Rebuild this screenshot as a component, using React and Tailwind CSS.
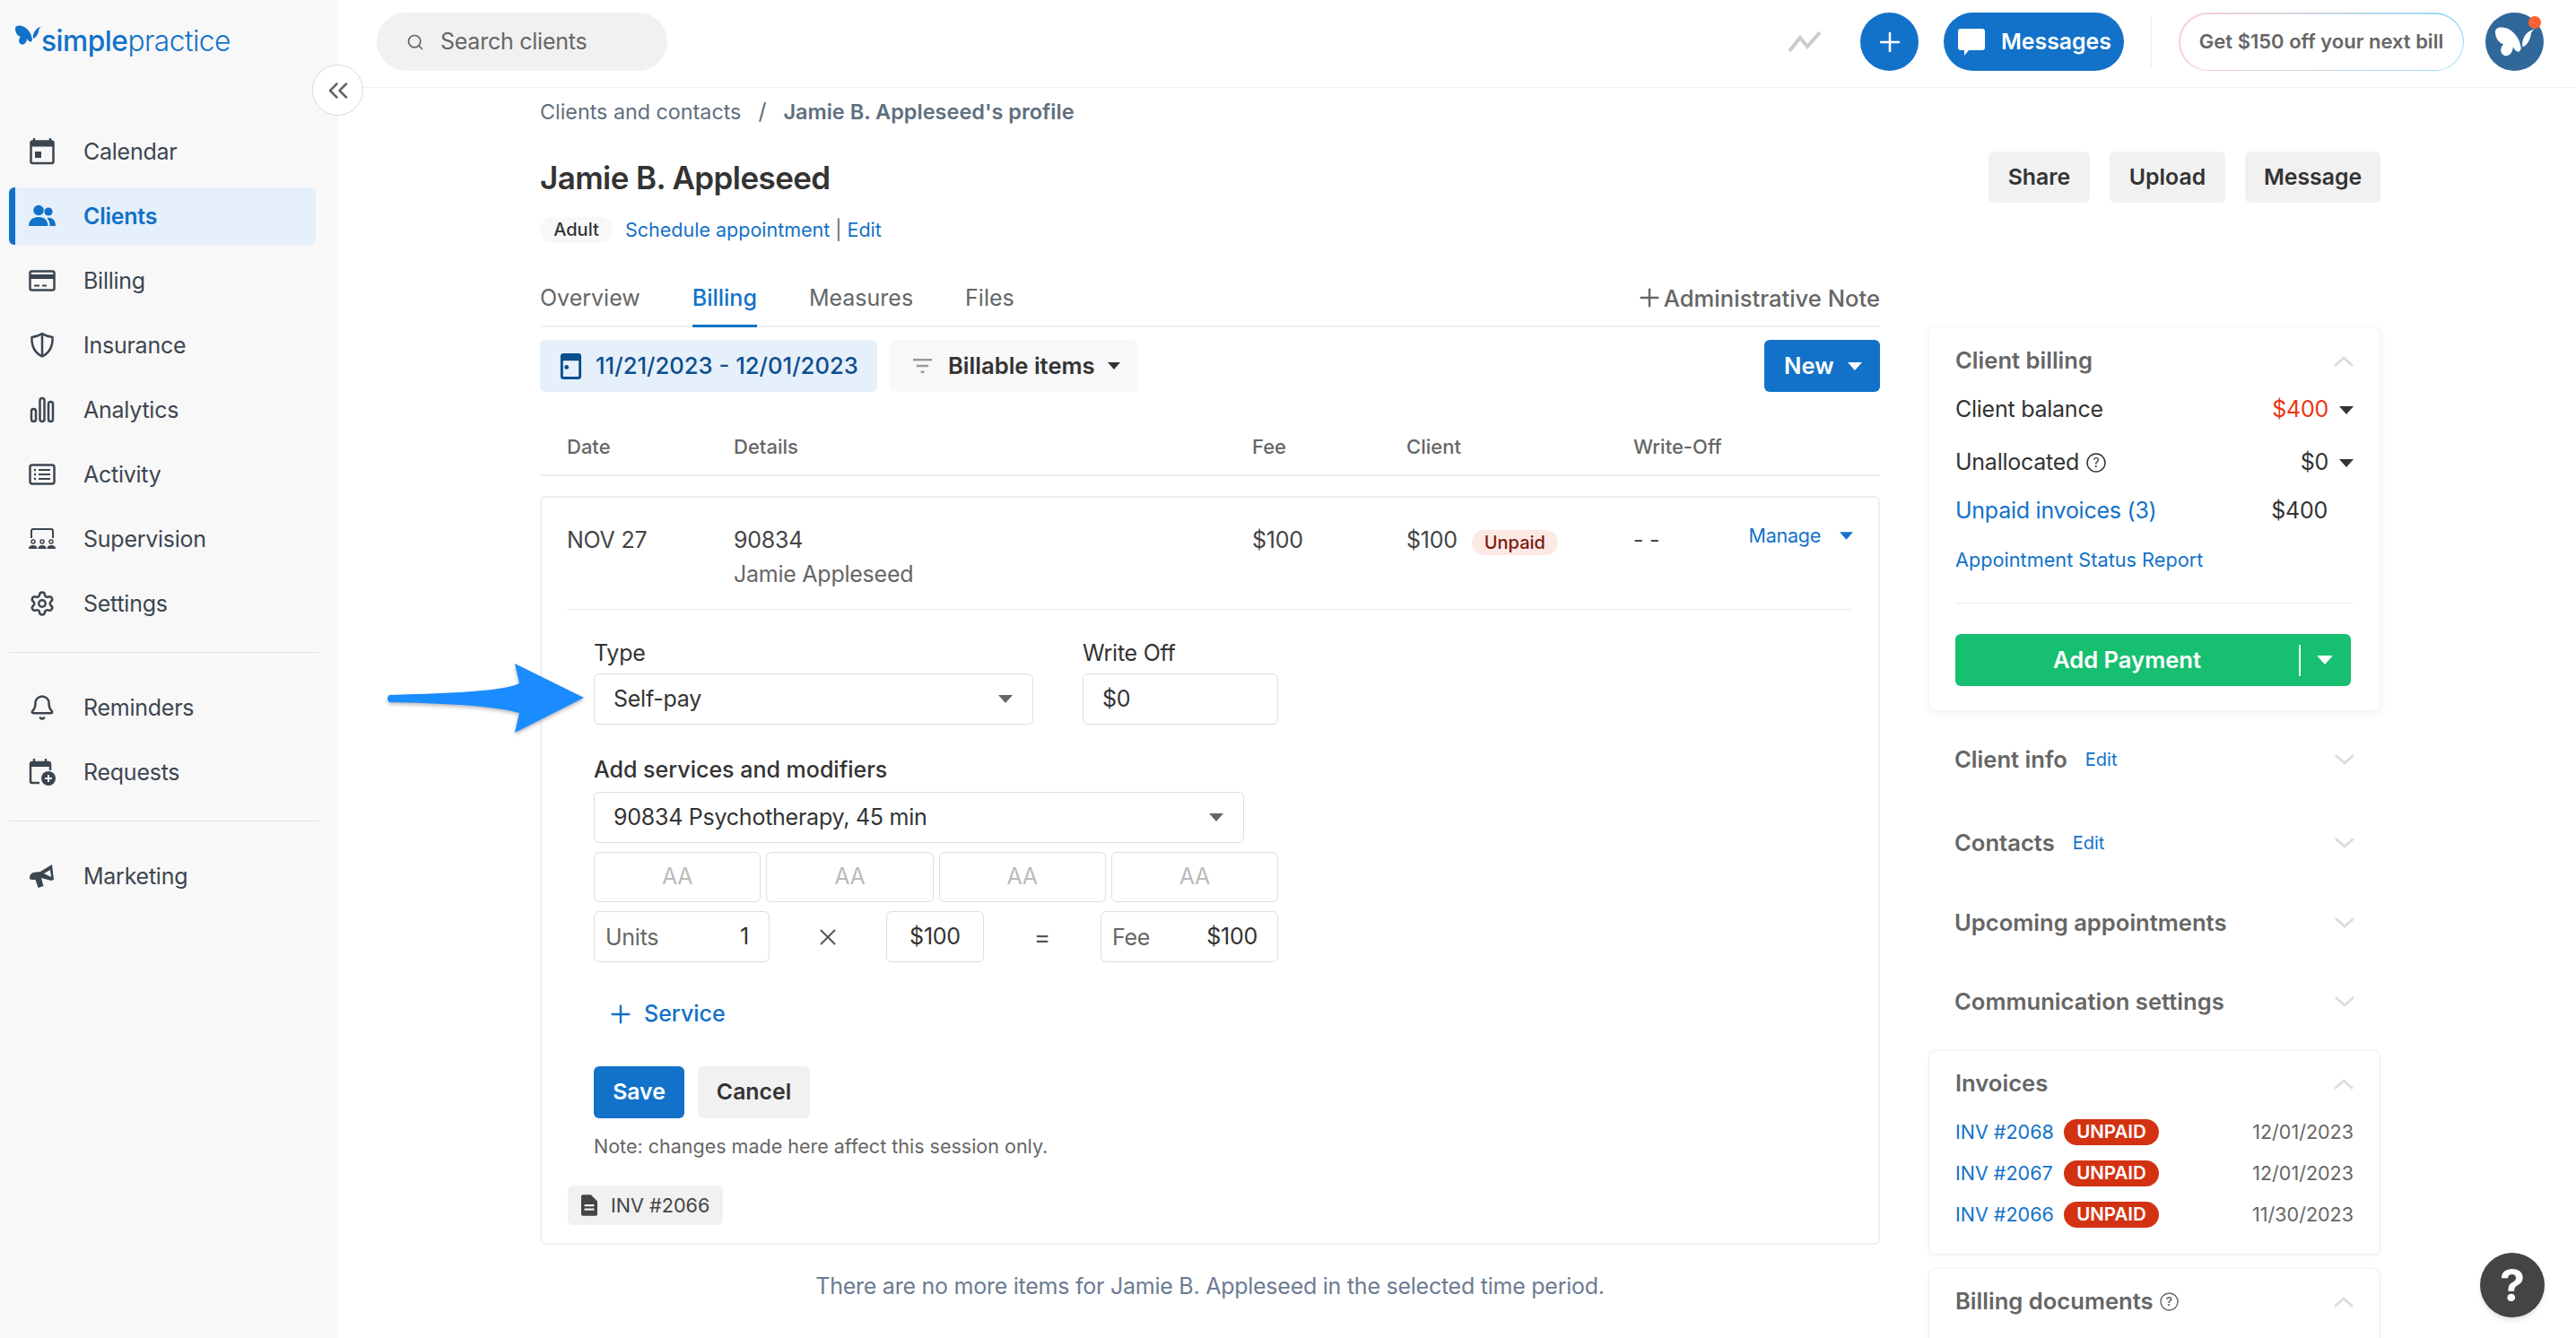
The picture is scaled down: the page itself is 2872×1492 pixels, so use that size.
import React from "react";
import { Settings, Bell, Search, ChevronsLeft, Plus, X } from "lucide-react";

const Caret = ({ className = "" }) => (
  <svg viewBox="0 0 16 9" className={className}>
    <path d="M0 0H16L8 9Z" fill="currentColor" />
  </svg>
);

const Chevron = ({ up }) => (
  <svg viewBox="0 0 22 13" className="w-[22px] h-[13px] shrink-0" fill="none" stroke="#dcdcdc" strokeWidth="3" strokeLinecap="round" strokeLinejoin="round">
    <path d={up ? "M2 11L11 3l9 8" : "M2 2l9 8 9-8"} />
  </svg>
);

const Butterfly = ({ className = "", color = "currentColor" }) => (
  <svg viewBox="0 0 29 23" className={className}>
    <path d="M0 4C0 0 5 0 9 1.500c5 2.500 9 7.500 10 14.500-1 4-4 3-6-1 0 5-4 8-7 6-3-2-2-6 0-8C2 12 0 8 0 4z" fill={color} />
    <path d="M20 15c-1-6 3-12 9-13-2 1-3 3-3 5-1 4-3 7-6 8z" fill={color} />
  </svg>
);

const CalendarIcon = () => (
  <svg viewBox="0 0 30 30" className="w-[30px] h-[30px] text-[#3c4650]">
    <path d="M6 1v4M24 1v4" stroke="currentColor" strokeWidth="2.500" strokeLinecap="round" />
    <rect x="2.500" y="3.500" width="25" height="24.500" rx="2" fill="none" stroke="currentColor" strokeWidth="2.500" />
    <rect x="2.500" y="3.500" width="25" height="6" fill="currentColor" />
    <rect x="7" y="15" width="7" height="7" fill="currentColor" />
  </svg>
);

const UsersIcon = () => (
  <svg viewBox="0 0 30 30" className="w-[30px] h-[30px] text-[#1272c9]">
    <circle cx="11" cy="8.500" r="5.800" fill="currentColor" />
    <circle cx="22" cy="10" r="4.600" fill="currentColor" />
    <path d="M0 26c0-6 4-10 11-10s10.500 4 10.500 10z" fill="currentColor" />
    <path d="M23.500 26c0-4-1-6.500-3-9 5-1.500 9.500 2 9.500 9z" fill="currentColor" />
  </svg>
);

const CardIcon = () => (
  <svg viewBox="0 0 30 30" className="w-[30px] h-[30px] text-[#3c4650]">
    <rect x="1.500" y="4.500" width="27" height="21" rx="2" fill="none" stroke="currentColor" strokeWidth="2.500" />
    <rect x="1.500" y="8" width="27" height="5" fill="currentColor" />
    <path d="M6 20.500h6M15 20.500h5" stroke="currentColor" strokeWidth="2" />
  </svg>
);

const ShieldIcon = () => (
  <svg viewBox="0 0 30 30" className="w-[30px] h-[30px] text-[#3c4650]">
    <path d="M15 2c3 2 7 3.500 11.500 4 .5 10-2.500 17-11.500 21.500C6 23 3 16 3.500 6 8 5.500 12 4 15 2z" fill="none" stroke="currentColor" strokeWidth="2.500" strokeLinejoin="round" />
    <path d="M15 3v24" stroke="currentColor" strokeWidth="2.500" />
  </svg>
);

const BarsIcon = () => (
  <svg viewBox="0 0 30 30" className="w-[30px] h-[30px] text-[#3c4650]" fill="none" stroke="currentColor" strokeWidth="2.500">
    <rect x="3" y="14" width="5" height="14" rx="2.500" />
    <rect x="12.500" y="2" width="5" height="26" rx="2.500" />
    <rect x="22" y="6" width="5" height="22" rx="2.500" />
  </svg>
);

const ListIcon = () => (
  <svg viewBox="0 0 30 30" className="w-[30px] h-[30px] text-[#3c4650]" fill="none" stroke="currentColor">
    <rect x="1.500" y="4.500" width="27" height="21" rx="2.500" strokeWidth="2.500" />
    <path d="M11 10h13M11 15h13M11 20h13" strokeWidth="2" />
    <path d="M6 10h2M6 15h2M6 20h2" strokeWidth="2.500" />
  </svg>
);

const SupervisionIcon = () => (
  <svg viewBox="0 0 30 30" className="w-[30px] h-[30px] text-[#3c4650]">
    <path d="M3 14V6a2 2 0 0 1 2-2h20a2 2 0 0 1 2 2v8" fill="none" stroke="currentColor" strokeWidth="2" />
    <circle cx="5" cy="18" r="2" fill="none" stroke="currentColor" strokeWidth="1.500" />
    <circle cx="15" cy="18" r="2" fill="none" stroke="currentColor" strokeWidth="1.500" />
    <circle cx="25" cy="18" r="2" fill="none" stroke="currentColor" strokeWidth="1.500" />
    <path d="M0 26c0-3 2-4 5-4s4.500 1 4.500 4zM10.500 26c0-3 1.500-4 4.500-4s4.500 1 4.500 4zM20.500 26c0-3 1.500-4 4.500-4s5 1 5 4z" fill="currentColor" />
  </svg>
);

const RequestsIcon = () => (
  <svg viewBox="0 0 30 30" className="w-[30px] h-[30px] text-[#3c4650]">
    <path d="M6 1v4M19 1v4" stroke="currentColor" strokeWidth="2.500" strokeLinecap="round" />
    <path d="M12 27H4a2 2 0 0 1-2-2V6a2 2 0 0 1 2-2h18a2 2 0 0 1 2 2v7" fill="none" stroke="currentColor" strokeWidth="2.500" />
    <rect x="2" y="4" width="22" height="5" fill="currentColor" />
    <circle cx="22" cy="22" r="8" fill="currentColor" />
    <path d="M22 18v8M18 22h8" stroke="#f8f8f8" strokeWidth="2" />
  </svg>
);

const MegaphoneIcon = () => (
  <svg viewBox="0 0 30 30" className="w-[30px] h-[30px] text-[#3c4650]">
    <path d="M1 17c0-3 1.500-5 4-6l8-1 13-8 2 17-3 1-11-3 2.500 9-6 2-3-9c-4 0-6.500 0-6.500-2z" fill="currentColor" />
    <path d="M17 12l7-4 1 8z" fill="#f8f8f8" />
  </svg>
);

const navTop = [
  { label: "Calendar", icon: <CalendarIcon /> },
  { label: "Clients", icon: <UsersIcon />, active: true },
  { label: "Billing", icon: <CardIcon /> },
  { label: "Insurance", icon: <ShieldIcon /> },
  { label: "Analytics", icon: <BarsIcon /> },
  { label: "Activity", icon: <ListIcon /> },
  { label: "Supervision", icon: <SupervisionIcon /> },
  { label: "Settings", icon: <Settings className="w-[30px] h-[30px] text-[#3c4650]" strokeWidth={2} /> },
];

const NavItem = ({ label, icon, active }) => (
  <div
    className={`w-[342px] h-16 mb-2 flex items-center gap-[31px] pl-[15px] border-l-[7px] rounded-md text-[25px] tracking-[-0.25px] ${
      active ? "bg-[#e6f0fa] border-[#1272c9] text-[#1272c9] font-semibold" : "border-transparent text-[#3c4650]"
    }`}
  >
    <span className="w-[30px] h-[30px] shrink-0">{icon}</span>
    <span className="mt-[2px]">{label}</span>
  </div>
);

const Sidebar = () => (
  <aside className="w-[377px] shrink-0 bg-[#f8f8f8] pl-[10px] h-full">
    <div className="h-[137px] pt-[22px] pl-[7px] flex items-start">
      <div className="flex items-start text-[#1272c9]">
        <Butterfly className="w-[29px] h-[23px] mt-[6px] shrink-0" />
        <span className="text-[31.700px] leading-[46px] tracking-[-0.5px] mt-[1px]">
          <span className="font-medium">simple</span>
          <span className="font-light">practice</span>
        </span>
      </div>
    </div>
    {navTop.map((n) => (
      <NavItem key={n.label} {...n} />
    ))}
    <div className="w-[345px] h-px bg-[#e2e2e2] mt-[22px] mb-[29px]" />
    <NavItem label="Reminders" icon={<Bell className="w-[30px] h-[30px] text-[#3c4650]" strokeWidth={2} />} />
    <NavItem label="Requests" icon={<RequestsIcon />} />
    <div className="w-[345px] h-px bg-[#e2e2e2] mt-[22px] mb-[29px]" />
    <NavItem label="Marketing" icon={<MegaphoneIcon />} />
  </aside>
);

const TopBar = () => (
  <header className="h-[98px] shrink-0 border-b border-[#f1f1f1] flex items-start pt-[14px] pl-[43px] pr-[36px]">
    <div className="w-[324px] h-[65px] rounded-full bg-[#f1f1f1] flex items-center pl-[33px] gap-[18px] text-[25px] tracking-[-0.25px] text-[#666]">
      <Search className="w-[20px] h-[20px]" strokeWidth={2} />
      Search clients
    </div>
    <div className="ml-auto flex items-center h-[65px]">
      <svg viewBox="0 0 36 24" className="w-[36px] h-[24px] mr-[44px]" fill="none" stroke="#cccccc" strokeWidth="4">
        <path d="M1 22L13 7l8 10L35 1" />
      </svg>
      <div className="w-[65px] h-[65px] rounded-full bg-[#1272c9] flex items-center justify-center">
        <Plus className="w-[34px] h-[34px] text-white" strokeWidth={1.8} />
      </div>
      <div className="w-[201px] h-[65px] ml-[28px] rounded-full bg-[#1272c9] flex items-center pl-[16px] gap-[18px] text-white text-[24.800px] font-semibold">
        <svg viewBox="0 0 30 30" className="w-[30px] h-[30px]">
          <path d="M3 0h24a3 3 0 0 1 3 3v18a3 3 0 0 1-3 3H12l-5 6v-6H3a3 3 0 0 1-3-3V3a3 3 0 0 1 3-3z" fill="#fff" />
        </svg>
        Messages
      </div>
      <div className="w-px h-[57px] bg-[#ececec] mx-[30px]" />
      <div className="w-[318px] h-[65px] rounded-full p-[1.500px] bg-gradient-to-r from-[#fbcfd2] to-[#8fdcf5]">
        <div className="w-full h-full rounded-full bg-white flex items-center justify-center text-[22px] font-semibold text-[#666]">
          Get $150 off your next bill
        </div>
      </div>
      <div className="relative w-[65px] h-[65px] ml-[24px] rounded-full bg-[#30689a] flex items-center justify-center">
        <Butterfly className="w-[44px] h-[36px]" color="#fff" />
        <span className="absolute top-[4px] right-[3px] w-[14px] h-[14px] rounded-full bg-[#ff6231]" />
      </div>
    </div>
  </header>
);

const GrayBtn = ({ children, className = "" }) => (
  <div className={`h-[57px] rounded-md bg-[#f1f1f1] flex items-center justify-center text-[24.800px] font-semibold text-[#333] ${className}`}>
    {children}
  </div>
);

const Box = ({ children, className = "" }) => (
  <div className={`border border-[#dedede] rounded-md flex items-center text-[25px] tracking-[-0.25px] text-[#333] ${className}`}>{children}</div>
);

const BillingCard = () => (
  <div className="mt-[22px] h-[835px] border-2 border-[#efefef] rounded-md flex flex-col">
    <div className="h-[125px] shrink-0 mx-[28px] border-b border-[#ececec] grid grid-cols-[186px_578px_172px_253px_1fr] pt-[29px] text-[25px] tracking-[-0.25px] text-[#444] leading-[36px]">
      <div>NOV 27</div>
      <div>
        <div>90834</div>
        <div className="text-[#666] mt-[2px]">Jamie Appleseed</div>
      </div>
      <div>$100</div>
      <div className="flex items-start">
        $100
        <span className="ml-[16px] mt-[7px] h-[28px] px-[14px] rounded-full bg-[#fce9e6] text-[#7a1a0a] text-[20px] tracking-normal font-medium leading-[28px]">Unpaid</span>
      </div>
      <div className="flex justify-between">
        <span>- -</span>
        <span className="flex items-start text-[21.500px] text-[#1272c9] leading-[26px]">
          Manage
          <Caret className="w-[15px] h-[9px] ml-[21px] mt-[9px]" />
        </span>
      </div>
    </div>
    <div className="pl-[58px] flex-1">
      <div className="flex mt-[32px] h-[80px]">
        <div className="w-[545px]">
          <div className="text-[25px] tracking-[-0.25px] text-[#333] leading-[32px] h-[32px]">Type</div>
          <Box className="w-[490px] h-[57px] mt-[7px] border-[#bdbdbd] pl-[21px] pr-[22px] justify-between">
            Self-pay
            <Caret className="w-[16px] h-[9px] text-[#666]" />
          </Box>
        </div>
        <div>
          <div className="text-[25px] tracking-[-0.25px] text-[#333] leading-[32px] h-[32px]">Write Off</div>
          <Box className="w-[218px] h-[57px] mt-[7px] pl-[21px]">$0</Box>
        </div>
      </div>
      <div className="mt-[50px] text-[25px] font-medium text-[#333] leading-[32px]">Add services and modifiers</div>
      <Box className="w-[725px] h-[57px] mt-[9px] pl-[21px] pr-[22px] justify-between">
        90834 Psychotherapy, 45 min
        <Caret className="w-[16px] h-[9px] text-[#666]" />
      </Box>
      <div className="w-[763px] mt-[10px] grid grid-cols-4 gap-[6px]">
        {[0, 1, 2, 3].map((i) => (
          <Box key={i} className="h-[56px] justify-center text-[#bbb]">AA</Box>
        ))}
      </div>
      <div className="w-[763px] mt-[10px] flex items-center">
        <Box className="w-[196px] h-[57px] pl-[12px] pr-[22px] justify-between">
          <span className="text-[#666] mt-[2px]">Units</span>
          <span>1</span>
        </Box>
        <div className="w-[130px] flex justify-center">
          <X className="w-[30px] h-[30px] text-[#555]" strokeWidth={1.600} />
        </div>
        <Box className="w-[109px] h-[57px] justify-center">$100</Box>
        <div className="w-[130px] flex justify-center text-[28px] text-[#555]">=</div>
        <Box className="w-[198px] h-[57px] pl-[12px] pr-[22px] justify-between">
          <span className="text-[#666] mt-[2px]">Fee</span>
          <span>$100</span>
        </Box>
      </div>
      <div className="mt-[41px] ml-[14px] flex items-center gap-[10px] text-[25px] font-medium text-[#1272c9] h-[34px]">
        <Plus className="w-[32px] h-[32px]" strokeWidth={1.800} />
        Service
      </div>
      <div className="mt-[41px] flex gap-[15px]">
        <div className="w-[101px] h-[58px] rounded-md bg-[#1272c9] text-white font-semibold text-[24.800px] flex items-center justify-center">Save</div>
        <GrayBtn className="w-[125px] h-[58px]">Cancel</GrayBtn>
      </div>
      <div className="mt-[17px] text-[21.500px] text-[#666] leading-[28px]">Note: changes made here affect this session only.</div>
      <div className="-ml-[29px] mt-[30px] w-[173px] h-[44px] rounded-md bg-[#f1f1f1] flex items-center pl-[15px] gap-[15px] text-[21.600px] text-[#444]">
        <svg viewBox="0 0 20 26" className="w-[18px] h-[24px]">
          <path d="M2 0h10l8 8v16a2 2 0 0 1-2 2H2a2 2 0 0 1-2-2V2a2 2 0 0 1 2-2z" fill="#444" />
          <path d="M4 13h12M4 18h12" stroke="#f1f1f1" strokeWidth="2.500" />
        </svg>
        INV #2066
      </div>
    </div>
  </div>
);

const LeftColumn = () => (
  <div className="w-[1494px] shrink-0">
    <div className="flex items-stretch h-[66px] border-b-2 border-[#f1f1f1] text-[25px] text-[#666]">
      <div className="flex items-start pt-[15px]">Overview</div>
      <div className="ml-[58px] flex items-start pt-[15px] border-b-[3px] -mb-[2px] border-[#1272c9] text-[#1272c9] font-medium">Billing</div>
      <div className="ml-[58px] flex items-start pt-[15px]">Measures</div>
      <div className="ml-[58px] flex items-start pt-[15px]">Files</div>
      <div className="ml-auto flex items-start pt-[15px] font-medium text-[25.600px]">
        <Plus className="w-[32px] h-[32px] mt-[2px]" strokeWidth={1.800} />
        Administrative Note
      </div>
    </div>
    <div className="flex mt-[14px] h-[58px]">
      <div className="w-[376px] rounded-md bg-[#e6f0fa] flex items-center pl-[22px] gap-[15px] text-[#0d4e8f] text-[25.600px] font-medium">
        <svg viewBox="0 0 24 30" className="w-[25px] h-[29px]">
          <rect x="1.500" y="1.500" width="21" height="27" rx="2" fill="none" stroke="currentColor" strokeWidth="3" />
          <rect x="1.500" y="1.500" width="21" height="7" fill="currentColor" />
          <circle cx="7" cy="16" r="2.500" fill="currentColor" />
        </svg>
        11/21/2023 - 12/01/2023
      </div>
      <div className="w-[276px] ml-[14px] rounded-md bg-[#f8f8f8] flex items-center pl-[25px] text-[#333] text-[25.600px] font-semibold">
        <svg viewBox="0 0 24 20" className="w-[23px] h-[20px] mr-[17px]" stroke="#999" strokeWidth="2.500">
          <path d="M1 3h22M5 10h14M10 17h4" />
        </svg>
        Billable items
        <Caret className="w-[14px] h-[8px] ml-[14px]" />
      </div>
      <div className="ml-auto w-[129px] rounded-md bg-[#1272c9] text-white text-[25.600px] font-semibold flex items-center pl-[22px] gap-[15px]">
        New
        <Caret className="w-[16px] h-[9px]" />
      </div>
    </div>
    <div className="h-[94px] pl-[30px] border-b-2 border-[#ececec] grid grid-cols-[186px_578px_172px_253px_1fr] items-center pt-[30px] text-[22px] font-medium text-[#666]">
      <div>Date</div>
      <div>Details</div>
      <div>Fee</div>
      <div>Client</div>
      <div>Write-Off</div>
    </div>
    <BillingCard />
    <p className="mt-[31px] text-center text-[25px] tracking-[-0.25px] text-[#6b7c93] leading-[30px]">
      There are no more items for Jamie B. Appleseed in the selected time period.
    </p>
  </div>
);

const Row = ({ children, className = "" }) => (
  <div className={`flex items-center justify-between text-[25px] tracking-[-0.25px] text-[#333] ${className}`}>{children}</div>
);

const Accordion = ({ title, edit, className = "" }) => (
  <div className={`px-[29px] flex items-center justify-between ${className}`}>
    <div className="flex items-center">
      <span className="text-[25.600px] font-semibold text-[#666]">{title}</span>
      {edit && <span className="text-[20px] text-[#1272c9] ml-[20px]">Edit</span>}
    </div>
    <Chevron />
  </div>
);

const invoices = [
  { no: "INV #2068", date: "12/01/2023" },
  { no: "INV #2067", date: "12/01/2023" },
  { no: "INV #2066", date: "11/30/2023" },
];

const RightColumn = () => (
  <div className="w-[504px] ml-[54px] shrink-0 pt-[2px]">
    <div className="h-[429px] rounded-lg border border-[#f4f4f4] shadow-[0_2px_10px_rgba(0,0,0,0.06)] px-[29px] pt-[18px]">
      <div className="flex items-center justify-between h-[38px]">
        <span className="text-[25.600px] font-semibold text-[#666]">Client billing</span>
        <Chevron up />
      </div>
      <Row className="h-[38px] mt-[17px]">
        <span>Client balance</span>
        <span className="flex items-center text-[#ee3311]">
          $400
          <Caret className="w-[16px] h-[9px] ml-[12px] text-[#333]" />
        </span>
      </Row>
      <Row className="h-[38px] mt-[21px]">
        <span className="flex items-center gap-[8px]">
          Unallocated
          <svg viewBox="0 0 22 22" className="w-[22px] h-[22px]">
            <circle cx="11" cy="11" r="10" fill="none" stroke="#333" strokeWidth="1.500" />
            <text x="11" y="16" textAnchor="middle" fontSize="14" fill="#333" fontFamily="Inter">?</text>
          </svg>
        </span>
        <span className="flex items-center">
          $0
          <Caret className="w-[16px] h-[9px] ml-[12px] text-[#333]" />
        </span>
      </Row>
      <Row className="h-[38px] mt-[16px]">
        <span className="text-[#1272c9]">Unpaid invoices (3)</span>
        <span className="mr-[29px]">$400</span>
      </Row>
      <div className="mt-[20px] h-[30px] leading-[30px] text-[21.700px] text-[#1272c9]">Appointment Status Report</div>
      <div className="mt-[33px] h-px bg-[#ececec]" />
      <div className="mt-[34px] w-[441px] h-[58px] rounded-md bg-[#17bf71] text-white text-[25.600px] font-semibold flex items-center">
        <span className="w-[383px] text-center">Add Payment</span>
        <span className="w-[2px] h-[35px] bg-white" />
        <Caret className="w-[18px] h-[10px] ml-[18px]" />
      </div>
    </div>
    <Accordion title="Client info" edit className="h-[92px] mt-[8px]" />
    <Accordion title="Contacts" edit className="h-[92px] mt-px" />
    <Accordion title="Upcoming appointments" className="h-[92px] -mt-[3px]" />
    <Accordion title="Communication settings" className="h-[84px]" />
    <div className="mt-[12px] h-[228px] rounded-lg border border-[#f0f0f0] shadow-[0_1px_4px_rgba(0,0,0,0.05)] px-[29px] pt-[17px]">
      <div className="flex items-center justify-between h-[38px]">
        <span className="text-[25.600px] font-semibold text-[#666]">Invoices</span>
        <Chevron up />
      </div>
      <div className="mt-[21px] flex flex-col gap-[17px]">
        {invoices.map((inv) => (
          <div key={inv.no} className="flex items-center h-[29px] text-[21.500px]">
            <span className="w-[121px] text-[#1272c9]">{inv.no}</span>
            <span className="w-[106px] h-[29px] rounded-full bg-[#d33212] text-white font-semibold text-[20.500px] flex items-center justify-center">UNPAID</span>
            <span className="ml-auto text-[#666]">{inv.date}</span>
          </div>
        ))}
      </div>
    </div>
    <div className="mt-[15px] h-[200px] rounded-lg border border-[#f0f0f0] shadow-[0_1px_4px_rgba(0,0,0,0.05)] px-[29px] pt-[17px]">
      <div className="flex items-center justify-between h-[38px]">
        <span className="flex items-center gap-[7px] text-[25.600px] font-semibold text-[#666]">
          Billing documents
          <svg viewBox="0 0 22 22" className="w-[21px] h-[21px]">
            <circle cx="11" cy="11" r="10" fill="none" stroke="#666" strokeWidth="1.500" />
            <text x="11" y="16" textAnchor="middle" fontSize="14" fill="#666" fontFamily="Inter">?</text>
          </svg>
        </span>
        <Chevron up />
      </div>
    </div>
  </div>
);

export default function App() {
  return (
    <div className="relative w-[2872px] h-[1492px] overflow-hidden flex bg-white font-['Inter',sans-serif]">
      <Sidebar />
      <div className="flex-1 flex flex-col min-w-0">
        <TopBar />
        <div className="pl-[225px]">
          <div className="h-[54px] flex items-center text-[23.300px] text-[#5f6f7e]">
            Clients and contacts
            <span className="mx-[19px] text-[25px]">/</span>
            <span className="font-semibold text-[23.500px]">Jamie B. Appleseed's profile</span>
          </div>
          <div className="w-[2052px] flex items-start justify-between mt-[23px]">
            <h1 className="text-[35px] leading-[46px] font-semibold text-[#333] tracking-[-0.6px]">Jamie B. Appleseed</h1>
            <div className="flex gap-[22px] -mt-[6px]">
              <GrayBtn className="w-[113px]">Share</GrayBtn>
              <GrayBtn className="w-[129px]">Upload</GrayBtn>
              <GrayBtn className="w-[151px]">Message</GrayBtn>
            </div>
          </div>
          <div className="flex items-center mt-[15px] h-[30px] text-[21.500px]">
            <span className="w-[81px] h-[29px] rounded-full bg-[#f8f8f8] text-[#333] font-medium text-[20px] flex items-center justify-center">Adult</span>
            <span className="ml-[14px] text-[#1272c9]">Schedule appointment</span>
            <span className="mx-[6px] text-[#666]">|</span>
            <span className="text-[#1272c9]">Edit</span>
          </div>
          <div className="flex mt-[28px]">
            <LeftColumn />
            <div className="mt-[63px]">
              <RightColumn />
            </div>
          </div>
        </div>
      </div>
      <button className="absolute left-[348px] top-[72px] w-[57px] h-[57px] rounded-full bg-white border border-[#dcdcdc] flex items-center justify-center text-[#666]">
        <ChevronsLeft className="w-[36px] h-[36px]" strokeWidth={1.700} />
      </button>
      <svg viewBox="0 0 221 77" className="absolute left-[430px] top-[740px] w-[221px] h-[77px] drop-shadow-[0_2px_2px_rgba(0,0,0,0.3)]">
        <path d="M144 0L221 38L144 77L149 55C120 47 60 44 4 43Q0 39 4 35C60 33 130 32 149 22Z" fill="#1a8cff" />
      </svg>
      <div className="absolute left-[2765px] top-[1397px] w-[72px] h-[72px] rounded-full bg-[#444] shadow-md flex items-center justify-center text-white text-[50px] font-bold">?</div>
    </div>
  );
}
